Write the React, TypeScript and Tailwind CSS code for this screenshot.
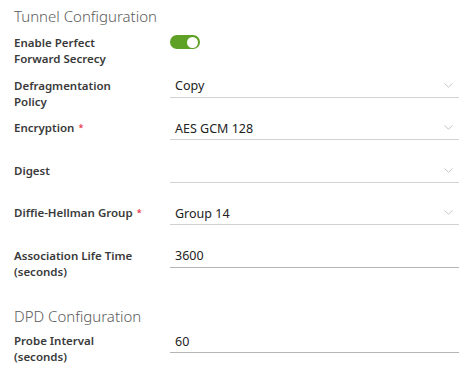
const font = { fontFamily: '"Noto Sans", "Liberation Sans", sans-serif' };

function Chevron() {
  return (
    <svg width="9" height="5" viewBox="0 0 9 5" fill="none" stroke="#c4c4c4" strokeWidth="1" className="shrink-0">
      <path d="M0.5 0.5 4.5 4.2 8.5 0.5" />
    </svg>
  );
}

function Label({ children, required }: { children: React.ReactNode; required?: boolean }) {
  return (
    <div className="w-[156px] shrink-0 pt-1 text-[11.5px] leading-4 font-semibold text-[#3a3a3a]">
      {children}
      {required && <span className="ml-1 align-top text-[9px] text-[#e8374a]">*</span>}
    </div>
  );
}

function Select({ value }: { value?: string }) {
  return (
    <div className="flex h-6 w-[289px] items-center justify-between border-b border-[#d2d2d2] pl-[5px] pr-[6px]">
      <span className="pt-[3px] text-[12.5px] text-[#222]">{value}</span>
      <Chevron />
    </div>
  );
}

function Input({ value }: { value: string }) {
  return (
    <div className="flex h-6 w-[289px] items-center border-b border-[#b5b5b5] pl-[5px]">
      <span className="pt-[3px] text-[12.5px] text-[#222]">{value}</span>
    </div>
  );
}

function Row({ children }: { children: React.ReactNode }) {
  return <div className="flex h-[42.5px] items-start">{children}</div>;
}

export default function App() {
  return (
    <div className="min-h-screen w-[468px] bg-white pl-[14px] pt-1" style={font}>
      <h2 className="h-6 text-[15px] leading-6 font-light text-[#5c5c5c]">Tunnel Configuration</h2>
      <div className="mt-[3px]">
        <Row>
          <Label>
            Enable Perfect
            <br />
            Forward Secrecy
          </Label>
          <div className="mt-1 flex h-[14px] w-[30px] items-center justify-end rounded-full bg-[#5ea124] pr-[2px]">
            <div className="h-[11px] w-[11px] rounded-full bg-white" />
          </div>
        </Row>
        <Row>
          <Label>
            Defragmentation
            <br />
            Policy
          </Label>
          <Select value="Copy" />
        </Row>
        <Row>
          <Label required>Encryption</Label>
          <Select value="AES GCM 128" />
        </Row>
        <Row>
          <Label>Digest</Label>
          <Select />
        </Row>
        <Row>
          <Label required>Diffie-Hellman Group</Label>
          <Select value="Group 14" />
        </Row>
        <Row>
          <Label>
            Association Life Time
            <br />
            (seconds)
          </Label>
          <Input value="3600" />
        </Row>
      </div>
      <h2 className="mt-[18px] h-6 text-[15px] leading-6 font-light text-[#5c5c5c]">DPD Configuration</h2>
      <div className="mt-px">
        <Row>
          <Label>
            Probe Interval
            <br />
            (seconds)
          </Label>
          <Input value="60" />
        </Row>
      </div>
    </div>
  );
}
